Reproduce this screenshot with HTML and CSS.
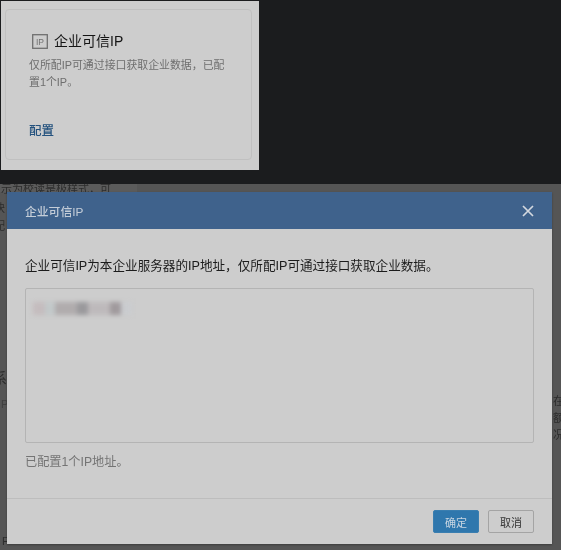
FILE: index.html
```html
<!DOCTYPE html>
<html lang="zh-CN">
<head>
<meta charset="utf-8">
<title>企业可信IP</title>
<link rel="stylesheet" href="styles.css">
</head>
<body>
<section class="top">
  <div class="sheet">
    <div class="card">
      <div class="card-head">
        <svg class="ip-icon" width="16" height="15" viewBox="0 0 16 15"><rect x="0.7" y="0.7" width="14.6" height="13.6" fill="none" stroke="#6f6f6f" stroke-width="1.3"/><text x="8" y="10.7" text-anchor="middle" class="ip-text">IP</text></svg>
        <h2 class="card-title">企业可信IP</h2>
      </div>
      <p class="card-desc">仅所配IP可通过接口获取企业数据，已配置1个IP。</p>
      <a class="card-link">配置</a>
    </div>
  </div>
</section>
<section class="page">
  <div class="bg-panel"></div>
  <div class="bg-frag frag-a">示为校读是极样式，可</div>
  <div class="bg-frag frag-b">块</div>
  <div class="bg-frag frag-c">配</div>
  <div class="bg-frag frag-d">系</div>
  <div class="bg-frag frag-e">P</div>
  <div class="bg-frag frag-f">在<br>额<br>况</div>
  <div class="bg-frag frag-g">F</div>
  <div class="modal">
    <header class="modal-head">
      <span class="modal-title">企业可信IP</span>
      <svg class="close" width="12" height="12" viewBox="0 0 12 12"><path d="M1 1L11 11M11 1L1 11" stroke="#d3d8df" stroke-width="1.7" fill="none"/></svg>
    </header>
    <div class="modal-body">
      <p class="intro">企业可信IP为本企业服务器的IP地址，仅所配IP可通过接口获取企业数据。</p>
      <div class="ip-box"><div class="blur-ip"><i class="b1"></i><i class="b2"></i><i class="b3"></i><i class="b4"></i><i class="b5"></i><i class="b6"></i><i class="b7"></i></div></div>
      <p class="hint">已配置1个IP地址。</p>
    </div>
    <footer class="modal-foot">
      <button class="btn primary">确定</button>
      <button class="btn">取消</button>
    </footer>
  </div>
</section>
</body>
</html>
```
FILE: styles.css
```css
* { box-sizing: border-box; }
html, body { margin: 0; padding: 0; }
body {
  width: 561px; height: 550px; overflow: hidden;
  background: #1b1c1e;
  font-family: "Liberation Sans", "Noto Sans CJK SC", sans-serif;
}
.top { height: 184px; padding-top: 1px; }
.sheet { width: 258px; height: 169px; margin-left: 1px; background: #cdcdcd; padding: 8px 0 0 4px; filter: blur(0.45px); }
.card { width: 247px; height: 151px; border: 1px solid #c0c0c0; border-radius: 4px; padding: 23px 20px 0 23px; }
.card-head { display: flex; align-items: center; gap: 6px; height: 16px; margin-left: 3px; }
.ip-icon { flex: none; }
.ip-text { font: 8.5px "Liberation Sans", sans-serif; fill: #6f6f6f; }
.card-title { margin: 0; font-size: 14px; font-weight: 400; color: #141414; line-height: 16px; }
.card-desc { margin: 8px 0 0; font-size: 10.9px; line-height: 17px; color: #6e6e6e; width: 200px; }
.card-link { display: block; margin-top: 32px; font-size: 12.5px; line-height: 17px; color: #24527e; font-weight: 500; }
.page { position: relative; height: 366px; background: #555; overflow: hidden; filter: blur(0.45px); }
.bg-panel { position: absolute; left: 0; top: 0; width: 137px; height: 8px; background: #5b5b5b; }
.bg-frag { position: absolute; color: #2c2c2c; font-size: 11px; line-height: 17px; white-space: nowrap; }
.frag-a { left: 1px; top: -3px; }
.frag-b { left: -6px; top: 16px; }
.frag-c { left: -6px; top: 34px; }
.frag-d { left: -7px; top: 186px; font-size: 14px; }
.frag-e { left: 1px; top: 212px; color: #404040; }
.frag-f { left: 553px; top: 209px; }
.frag-g { left: 2px; top: 349px; }
.modal { position: absolute; left: 7px; top: 8px; width: 545px; height: 352px; background: #cdcdcd; display: flex; flex-direction: column; box-shadow: 0 1px 2px rgba(0,0,0,.3); }
.modal-head { flex: none; height: 37px; background: #3f628c; display: flex; align-items: center; justify-content: space-between; padding: 0 18px 0 18px; }
.modal-title { font-size: 11.8px; font-weight: 500; color: #c4cdd8; }
.modal-body { flex: 1; padding: 29px 18px 0 18px; }
.intro { margin: 0; font-size: 12.6px; line-height: 17px; color: #1c1c1c; white-space: nowrap; }
.ip-box { margin-top: 13px; height: 155px; width: 509px; border: 1px solid #b4b4b4; border-radius: 2px; padding: 11px 0 0 7px; }
.blur-ip { display: flex; height: 16px; align-items: center; filter: blur(2px); }
.blur-ip i { display: block; height: 13px; }
.b1 { width: 12px; background: #c4bcbe; }
.b2 { width: 10px; background: #c2c8c9; }
.b3 { width: 22px; background: #b0acad; }
.b4 { width: 11px; background: #9a999c; }
.b5 { width: 22px; background: #bdb9bb; }
.b6 { width: 11px; background: #a09a9d; }
.b7 { width: 11px; background: #cacccf; }
.hint { margin: 11px 0 0; font-size: 12.2px; line-height: 17px; color: #747474; }
.modal-foot { flex: none; height: 46px; border-top: 1px solid #bdbdbd; display: flex; justify-content: flex-end; gap: 9px; padding: 11px 18px 0 0; }
.btn { width: 46px; height: 23px; padding: 0; font: 11px "Liberation Sans", "Noto Sans CJK SC", sans-serif; border: 1px solid #a4a4a4; border-radius: 2px; background: #cdcdcd; color: #333; }
.primary { background: #2f77ad; border-color: #3a7eb0; color: #c9d6e2; }
```
